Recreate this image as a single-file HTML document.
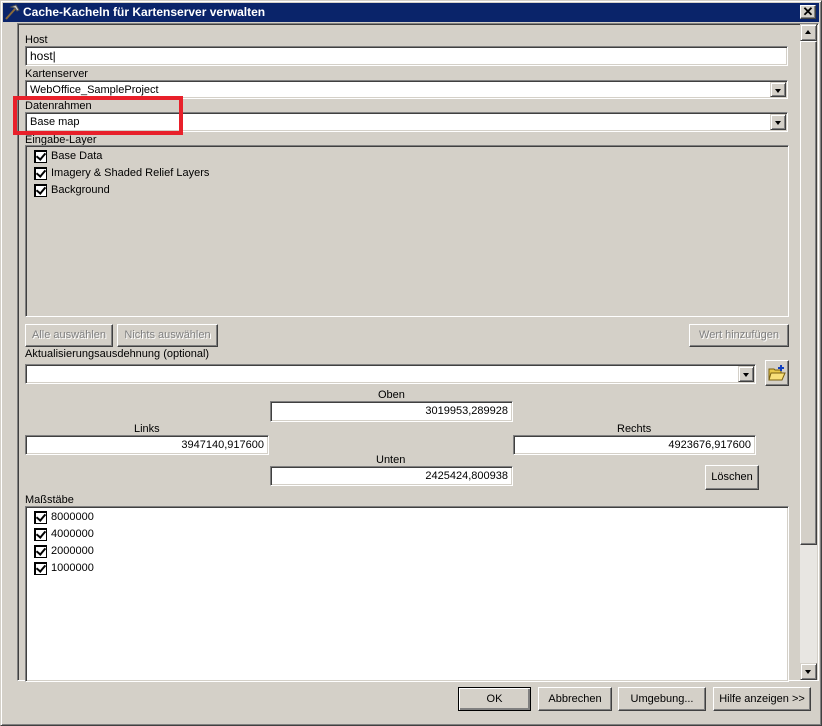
<!DOCTYPE html>
<html><head><meta charset="utf-8"><style>
*{box-sizing:border-box;margin:0;padding:0}
body{width:822px;height:726px;background:#d4d0c8;font-family:"Liberation Sans",sans-serif;font-size:11px;color:#000;position:relative;overflow:hidden}
.a{position:absolute}
.win{left:0;top:0;width:822px;height:726px;border:1px solid;border-color:#d4d0c8 #404040 #404040 #d4d0c8;box-shadow:inset 1px 1px #fff,inset -1px -1px #808080}
.title{left:3px;top:3px;width:816px;height:19px;background:#0a246a;color:#fff;font-weight:bold;font-size:12px;line-height:19px;padding-left:20px}
.sunk{border:1px solid;border-color:#808080 #fff #fff #808080;box-shadow:inset 1px 1px #404040,inset -1px -1px #d4d0c8;background:#fff}
.panel{left:17px;top:23px;width:802px;height:658px;border:1px solid;border-color:#808080 #fff #fff #808080;box-shadow:inset 1px 1px #404040}
.lbl{line-height:12px}
.inp{padding:2px 4px;line-height:14px}
.btn{border:1px solid;border-color:#fff #404040 #404040 #fff;box-shadow:inset -1px -1px #808080;background:#d4d0c8;text-align:center;line-height:20px}
.dis{color:#808080;text-shadow:1px 1px #fff}
.arr{width:16px;border:1px solid;border-color:#d4d0c8 #404040 #404040 #d4d0c8;box-shadow:inset 1px 1px #fff,inset -1px -1px #808080;background:#d4d0c8}
.arr:after{content:"";position:absolute;left:4px;top:6px;border-left:3.5px solid transparent;border-right:3.5px solid transparent;border-top:4px solid #000}
.up:after{border-top:0;border-bottom:4px solid #000;top:5px}
.cb{width:13px;height:13px;border:1px solid #000;background:#fff;box-shadow:inset 1px 1px #000}
.cb:after{content:"";position:absolute;left:3px;top:0px;width:4px;height:7px;border:solid #000;border-width:0 2px 2px 0;transform:rotate(40deg)}
.r{text-align:right}
</style></head><body>
<div class="a win"></div>
<div class="a title">Cache-Kacheln für Kartenserver verwalten</div>
<svg class="a" style="left:4px;top:4px" width="16" height="16"><path d="M2 15 L11 5" stroke="#8a6a3a" stroke-width="2"/><path d="M7 3 L12 1 L15 6 L13 7 L11 4 Z" fill="#ccc" stroke="#555"/></svg>
<div class="a btn" style="left:800px;top:5px;width:16px;height:14px;line-height:12px;font-size:13px;font-weight:bold">✕</div>
<div class="a panel"></div>

<div class="a lbl" style="left:25px;top:34px">Host</div>
<div class="a sunk inp" style="left:25px;top:46px;width:763px;height:20px;font-size:12px">host|</div>
<div class="a lbl" style="left:25px;top:68px">Kartenserver</div>
<div class="a sunk inp" style="left:25px;top:80px;width:763px;height:19px">WebOffice_SampleProject</div>
<div class="a arr" style="left:770px;top:82px;height:15px"></div>
<div class="a lbl" style="left:25px;top:100px">Datenrahmen</div>
<div class="a sunk inp" style="left:25px;top:112px;width:763px;height:20px">Base map</div>
<div class="a arr" style="left:770px;top:114px;height:16px"></div>
<div class="a lbl" style="left:25px;top:134px">Eingabe-Layer</div>
<div class="a" style="left:13px;top:96px;width:170px;height:39px;border:4px solid #e8202a"></div>
<div class="a" style="left:25px;top:145px;width:764px;height:172px;border:1px solid;border-color:#808080 #fff #fff #808080;box-shadow:inset 1px 1px #404040"></div>
<div class="a cb" style="left:34px;top:150px"></div><div class="a" style="left:51px;top:150px">Base Data</div>
<div class="a cb" style="left:34px;top:167px"></div><div class="a" style="left:51px;top:167px">Imagery &amp; Shaded Relief Layers</div>
<div class="a cb" style="left:34px;top:184px"></div><div class="a" style="left:51px;top:184px">Background</div>

<div class="a btn dis" style="left:25px;top:324px;width:88px;height:23px">Alle auswählen</div>
<div class="a btn dis" style="left:117px;top:324px;width:101px;height:23px">Nichts auswählen</div>
<div class="a btn dis" style="left:689px;top:324px;width:100px;height:23px">Wert hinzufügen</div>
<div class="a lbl" style="left:25px;top:348px">Aktualisierungsausdehnung (optional)</div>
<div class="a sunk" style="left:25px;top:364px;width:731px;height:20px"></div>
<div class="a arr" style="left:738px;top:366px;height:16px"></div>
<div class="a btn" style="left:765px;top:360px;width:24px;height:26px"></div>
<svg class="a" style="left:768px;top:364px" width="18" height="18"><path d="M1 5h5l1 1h6v10H1z" fill="#e8c84a" stroke="#7a6010"/><path d="M3 9h14l-3 7H1z" fill="#f8e07a" stroke="#7a6010"/><path d="M13 1v6M10 4h6" stroke="#1040c0" stroke-width="2"/></svg>

<div class="a" style="left:378px;top:389px">Oben</div>
<div class="a sunk inp r" style="left:270px;top:401px;width:243px;height:21px">3019953,289928</div>
<div class="a" style="left:134px;top:423px">Links</div>
<div class="a sunk inp r" style="left:25px;top:435px;width:244px;height:20px">3947140,917600</div>
<div class="a" style="left:617px;top:423px">Rechts</div>
<div class="a sunk inp r" style="left:513px;top:435px;width:243px;height:20px">4923676,917600</div>
<div class="a" style="left:376px;top:454px">Unten</div>
<div class="a sunk inp r" style="left:270px;top:466px;width:243px;height:20px">2425424,800938</div>
<div class="a btn" style="left:705px;top:465px;width:54px;height:25px;line-height:23px">Löschen</div>

<div class="a lbl" style="left:25px;top:494px">Maßstäbe</div>
<div class="a sunk" style="left:25px;top:506px;width:764px;height:176px"></div>
<div class="a cb" style="left:34px;top:511px"></div><div class="a" style="left:51px;top:511px">8000000</div>
<div class="a cb" style="left:34px;top:528px"></div><div class="a" style="left:51px;top:528px">4000000</div>
<div class="a cb" style="left:34px;top:545px"></div><div class="a" style="left:51px;top:545px">2000000</div>
<div class="a cb" style="left:34px;top:562px"></div><div class="a" style="left:51px;top:562px">1000000</div>

<div class="a" style="left:800px;top:24px;width:17px;height:656px;background:#e8e6e2"></div>
<div class="a arr up" style="left:800px;top:24px;height:17px;width:17px"></div>
<div class="a btn" style="left:800px;top:41px;width:17px;height:504px"></div>
<div class="a arr" style="left:800px;top:663px;height:17px;width:17px"></div>

<div class="a btn" style="left:458px;top:687px;width:73px;height:24px;border-color:#000;box-shadow:inset 1px 1px #fff,inset -2px -2px #808080;line-height:22px">OK</div>
<div class="a btn" style="left:538px;top:687px;width:74px;height:24px;line-height:22px">Abbrechen</div>
<div class="a btn" style="left:618px;top:687px;width:88px;height:24px;line-height:22px">Umgebung...</div>
<div class="a btn" style="left:713px;top:687px;width:98px;height:24px;line-height:22px">Hilfe anzeigen &gt;&gt;</div>
</body></html>
